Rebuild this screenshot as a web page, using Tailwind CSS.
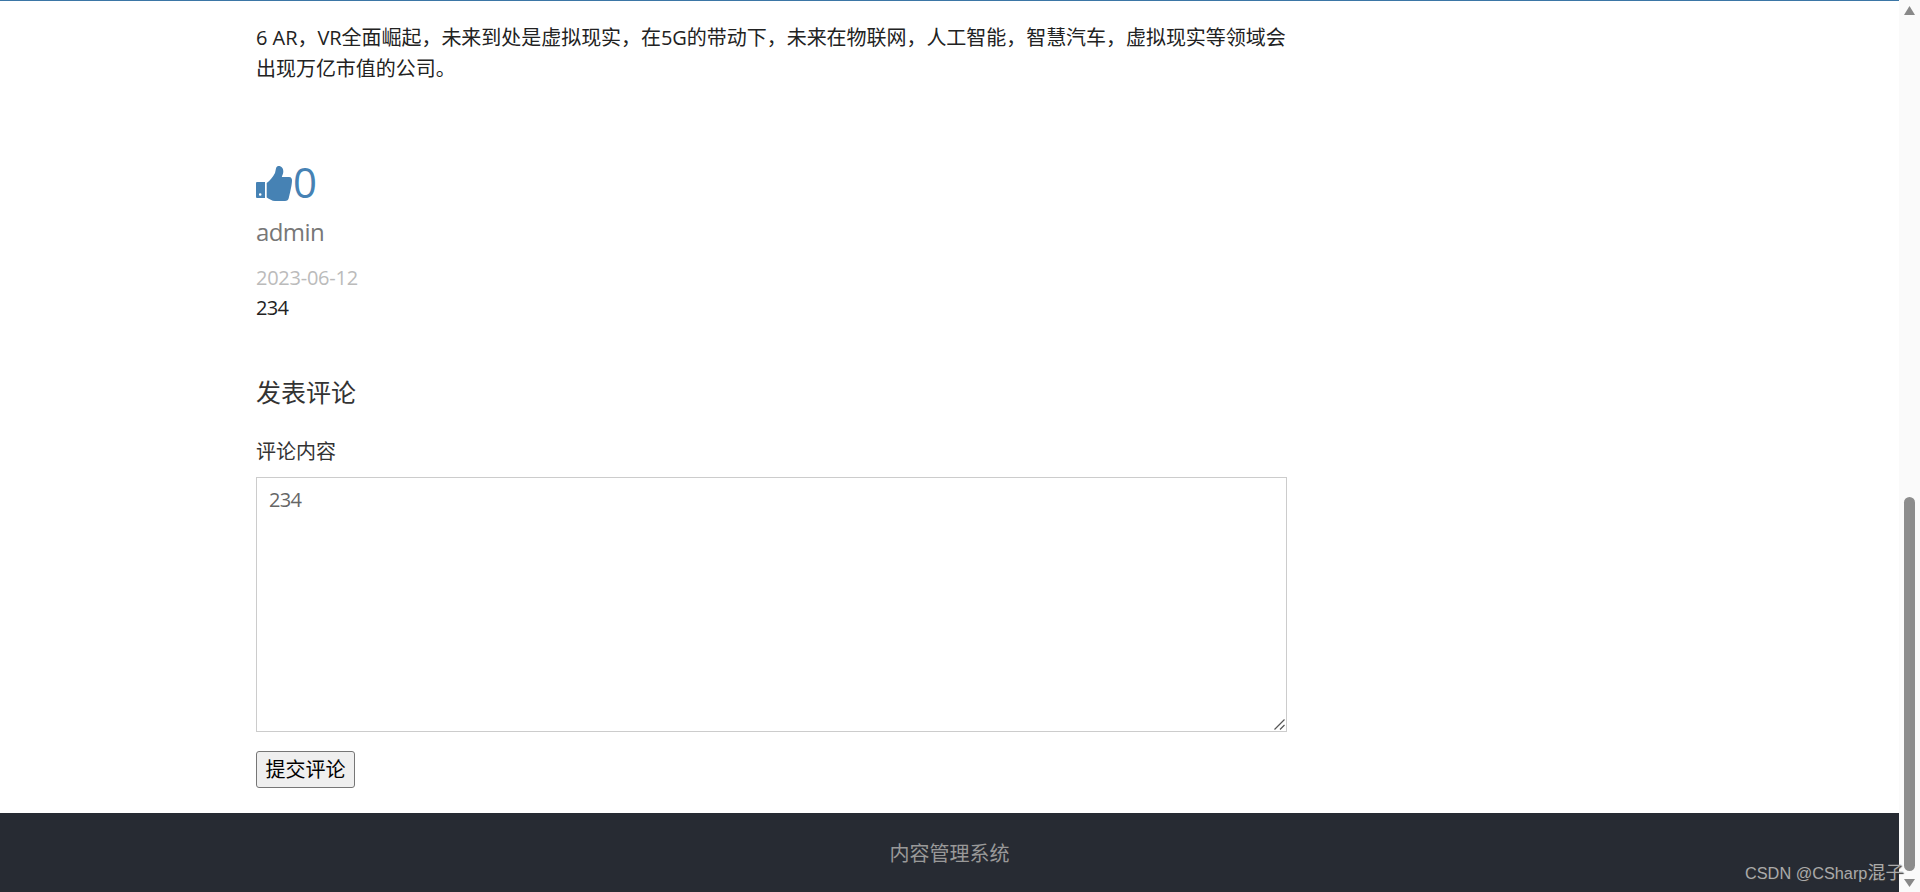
<!DOCTYPE html>
<html lang="zh-CN">
<head>
  <meta charset="UTF-8" />
  <title>内容管理系统</title>
  <script src="https://cdn.jsdelivr.net/npm/@tailwindcss/browser@4"></script>
</head>
<body class="h-[892px] overflow-hidden bg-white flex font-['Open_Sans','Noto_Sans_CJK_SC',sans-serif] text-[#333]">
<!-- Page -->
<div class="w-[1899px] h-full flex flex-col">
  <div class="h-px bg-[#3b76a6]"></div>
  <main class="flex-1 pl-[256px] w-[1287px] box-content">
    <p class="mt-[21px] text-[20px] leading-[31px] w-[1031px] tracking-[-0.04px] text-[#222]">6 AR，VR全面崛起，未来到处是虚拟现实，在5G的带动下，未来在物联网，人工智能，智慧汽车，虚拟现实等领域会出现万亿市值的公司。</p>

    <!-- Like -->
    <div class="mt-[76px] flex items-center h-[44px] text-[#4682b4] text-[42px] leading-[44px] tracking-[-1px]">
      <svg class="w-[37px] h-[38px]" viewBox="0 0 37 38" fill="currentColor">
        <path fill-rule="evenodd" d="M1 19h8v16H1a1 1 0 0 1-1-1V20a1 1 0 0 1 1-1zM4.2 30.2a1.3 1.3 0 1 0 0 2.6a1.3 1.3 0 0 0 0-2.6z" />
        <path d="M10.7 20C13.5 18 17 14 19 10C20 7 19.5 4 22 3.1C25.5 2.8 27.5 5.5 27.3 9C27 11 26.3 12.5 25.8 14L33 14C35.5 14 36 16 36 17.5C36 21 34.5 28 33 34C32.5 37 31 38 29 38L19 38C16 38 13.5 36 10.7 34.5Z" />
      </svg>
      <span>0</span>
    </div>

    <!-- Comment -->
    <div class="mt-[11px] text-[24px] leading-[34px] text-[#777] tracking-[-0.6px]">admin</div>
    <div class="mt-[14px] text-[20px] leading-[30px] text-[#bbb] tracking-[-0.25px]">2023-06-12</div>
    <div class="text-[20px] leading-[30px] text-[#222] tracking-[-0.7px]">234</div>

    <h3 class="mt-[51px] text-[25px] leading-[36px] text-[#333]">发表评论</h3>
    <form class="mt-[27px]">
      <label class="block text-[20px] leading-[30px]" for="content">评论内容</label>
      <div class="relative mt-[10px] w-[1031px]">
        <textarea id="content" class="block w-full h-[255px] resize-none border border-[#ccc] px-[12px] py-[8px] text-[20px] leading-[28px] tracking-[-0.7px] text-[#666]">234</textarea>
        <svg class="absolute right-[1px] bottom-[1px] w-[14px] h-[14px]" viewBox="0 0 14 14" stroke="#555" stroke-width="1.2" fill="none"><path d="M2.5 12.5L12.5 2.5M8 12.5L12.5 8" /></svg>
      </div>
      <button type="button" class="mt-[19px] block w-[99px] h-[37px] bg-[#efefef] border border-[#767676] rounded-[3px] text-[20px] leading-[28px] text-black">提交评论</button>
    </form>
  </main>
  <footer class="h-[79px] pt-[2px] bg-[#272b33] flex items-center justify-center text-[20px] text-[#999]">内容管理系统</footer>
</div>

<!-- Scrollbar -->
<aside class="w-[21px] h-full bg-[#fafafa] flex flex-col items-center">
  <svg class="mt-[6px] w-[11px] h-[9px] shrink-0" viewBox="0 0 11 9" fill="#888"><path d="M5.5 0L11 9H0Z" /></svg>
  <div class="mt-[482px] w-[11px] h-[374px] rounded-full bg-[#8c8c8c] shrink-0"></div>
  <svg class="mt-[8px] w-[11px] h-[8px] shrink-0" viewBox="0 0 11 8" fill="#888"><path d="M0 0H11L5.5 8Z" /></svg>
</aside>

<!-- Watermark -->
<div class="absolute left-[1745px] top-[861px] text-[16.3px] leading-[24px] text-[#aaa] whitespace-nowrap font-['Liberation_Sans','Noto_Sans_CJK_SC',sans-serif] [text-shadow:1px_1px_1px_#333]">CSDN @CSharp<span class="text-[18px]">混子</span></div>
</body>
</html>
